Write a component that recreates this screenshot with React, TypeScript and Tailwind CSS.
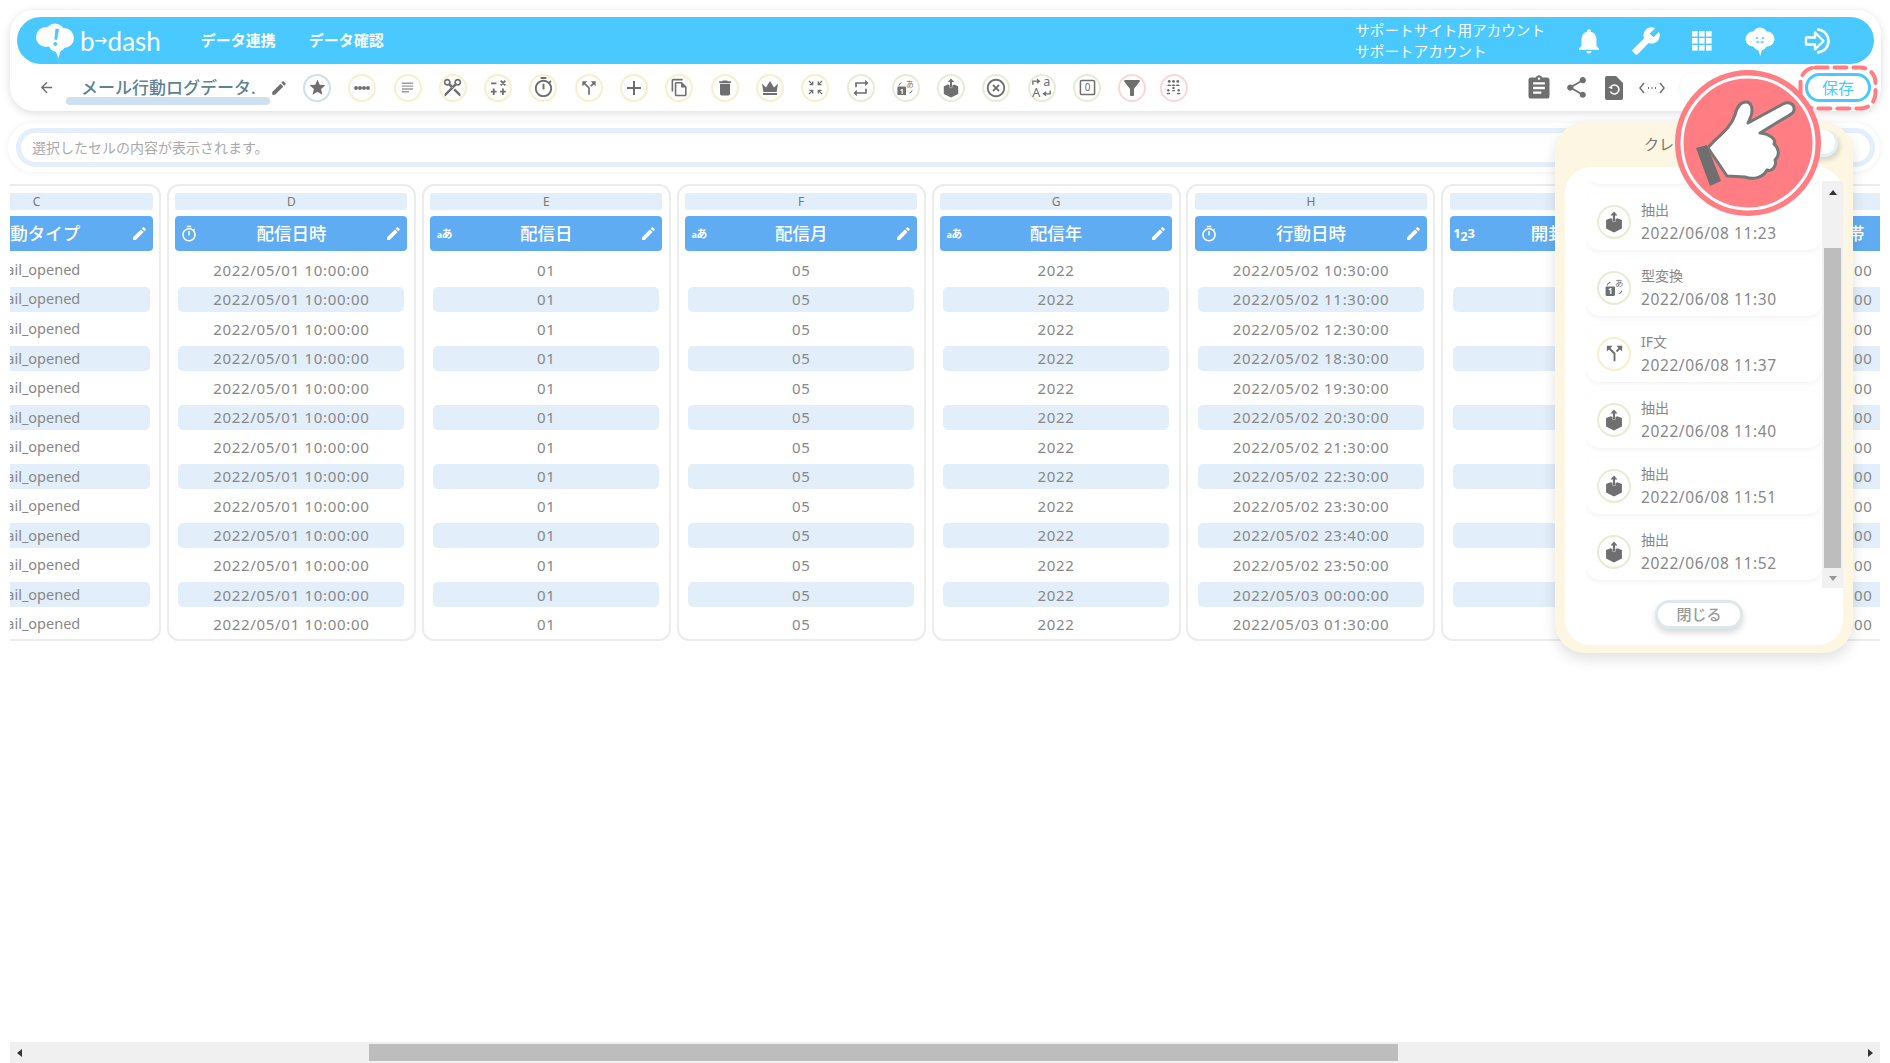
import type { ReactNode } from "react";
import {
  MdAdd,
  MdArrowBack,
  MdAssignment,
  MdBuild,
  MdCallSplit,
  MdDelete,
  MdEdit,
  MdFilterAlt,
  MdHighlightOff,
  MdNotifications,
  MdOutlineFileCopy,
  MdOutlineTimer,
  MdRepeat,
  MdShare,
  MdStar,
  MdSubject,
  MdContentCut,
} from "react-icons/md";

const font = "font-['Noto_Sans','Noto_Sans_CJK_JP',sans-serif]";

function Dots() {
  return (
    <svg viewBox="0 0 18 18" className="h-[18px] w-[18px]" fill="#6f6f6f">
      <rect x="2" y="8.6" width="14" height="0.8" />
      <circle cx="3" cy="9" r="1.9" />
      <circle cx="7" cy="9" r="1.9" />
      <circle cx="11" cy="9" r="1.9" />
      <circle cx="15" cy="9" r="1.9" />
    </svg>
  );
}

function Calc() {
  return (
    <svg viewBox="0 0 18 18" className="h-[19px] w-[19px]" stroke="#6f6f6f" strokeWidth="1.7" fill="none">
      <path d="M2 5h5M11 2.5l4.5 4.5M15.5 2.5L11 7M4.5 10v6M1.8 13h5.4M13.2 10v6M10.5 13h5.4" />
    </svg>
  );
}

function Crown() {
  return (
    <svg viewBox="0 0 20 18" className="h-[18px] w-[20px]" fill="#6f6f6f">
      <path d="M2 4.5l4 4L10 2l4 6.5 4-4-1.4 8.5H3.4z" />
      <rect x="3" y="14" width="14" height="2" />
    </svg>
  );
}

function Compress() {
  return (
    <svg viewBox="0 0 18 18" className="h-[17px] w-[17px]" fill="none" stroke="#6f6f6f" strokeWidth="1.4">
      <path d="M2 2l4 4M6 2.6V6H2.6M16 2l-4 4M12 2.6V6h3.4M2 16l4-4M6 15.4V12H2.6M16 16l-4-4M12 15.4V12h3.4" />
    </svg>
  );
}

function TypeChange({ size = 19 }: { size?: number }) {
  return (
    <svg viewBox="0 0 20 20" width={size} height={size} fill="none">
      <path d="M3 8a4 4 0 0 1 3-3M17 13a4 4 0 0 1-3 3" stroke="#6f6f6f" strokeWidth="1" />
      <rect x="1.5" y="9" width="9" height="9" rx="1" fill="#6f6f6f" />
      <text x="6" y="16.4" textAnchor="middle" fontSize="7.5" fontWeight="700" fill="#fff" fontFamily="Noto Sans">1</text>
      <text x="14.5" y="9" textAnchor="middle" fontSize="8" fill="#6f6f6f" fontFamily="Noto Sans CJK JP">あ</text>
    </svg>
  );
}

function BoxUp({ size = 20 }: { size?: number }) {
  return (
    <svg viewBox="0 0 20 20" width={size} height={size} fill="#6f6f6f">
      <path d="M2.8 8.2L7 6.6 10 8l3-1.4 4.2 1.6v7.8L10 19.6l-7.2-3.6z" />
      <path d="M10 .4l3.2 3.6H11v5.6H9V4H6.8z" stroke="#fff" strokeWidth="0.7" paintOrder="stroke" />
    </svg>
  );
}

function Translate() {
  return (
    <svg viewBox="0 0 20 20" className="h-[23px] w-[23px]" fill="none">
      <text x="5.5" y="18.5" textAnchor="middle" fontSize="11" fill="#6f6f6f" fontFamily="Noto Sans">A</text>
      <text x="14.5" y="9" textAnchor="middle" fontSize="11" fill="#6f6f6f" fontFamily="Noto Sans">a</text>
      <path d="M2.5 7.5V4.5h5M6 2.8l2.2 1.7L6 6.2M17.5 12.5v3h-5M14 13.8l-2.2 1.7 2.2 1.7" stroke="#6f6f6f" strokeWidth="1.2" />
    </svg>
  );
}

function ZeroBox() {
  return (
    <svg viewBox="0 0 18 18" className="h-[17px] w-[17px]" fill="none">
      <rect x="1.5" y="1.5" width="15" height="15" rx="1.5" stroke="#6f6f6f" strokeWidth="1.6" />
      <text x="9" y="13.2" textAnchor="middle" fontSize="10.5" fill="#6f6f6f" fontFamily="Noto Sans">0</text>
    </svg>
  );
}

function People() {
  return (
    <svg viewBox="0 0 20 20" className="h-[19px] w-[19px]" fill="#6f6f6f">
      <circle cx="5.5" cy="3.6" r="1.5" />
      <circle cx="10" cy="3.6" r="1.5" />
      <circle cx="14.5" cy="3.6" r="1.5" />
      <path d="M3.5 8.4c0-2 4-2 4 0zM8 8.4c0-2 4-2 4 0zM12.5 8.4c0-2 4-2 4 0z" />
      <circle cx="10" cy="10.6" r="1.3" />
      <path d="M8.2 14c0-1.8 3.6-1.8 3.6 0z" />
      <circle cx="4.6" cy="13" r="1.3" />
      <circle cx="15.4" cy="13" r="1.3" />
      <path d="M2.6 17c0-2 4-2 4 0zM13.4 17c0-2 4-2 4 0z" />
    </svg>
  );
}

function ToolCircle({ tone, children }: { tone: string; children: ReactNode }) {
  return (
    <div className={`flex h-7 w-7 shrink-0 items-center justify-center rounded-full border-2 bg-white text-[#6f6f6f] ${tone}`}>
      {children}
    </div>
  );
}

const blue = "border-[#cfe0f0]";
const yellow = "border-[#fbeecb]";
const green = "border-[#e8ecd5]";
const red = "border-[#fbd8d8]";

const tools: { tone: string; icon: ReactNode }[] = [
  { tone: blue, icon: <MdStar size={19} /> },
  { tone: yellow, icon: <Dots /> },
  { tone: yellow, icon: <MdSubject size={17} className="text-[#9a9a9a]" /> },
  { tone: yellow, icon: <MdContentCut size={21} className="rotate-90" /> },
  { tone: yellow, icon: <Calc /> },
  { tone: yellow, icon: <MdOutlineTimer size={23} /> },
  { tone: yellow, icon: <MdCallSplit size={20} /> },
  { tone: yellow, icon: <MdAdd size={24} /> },
  { tone: yellow, icon: <MdOutlineFileCopy size={19} /> },
  { tone: yellow, icon: <MdDelete size={20} /> },
  { tone: yellow, icon: <Crown /> },
  { tone: yellow, icon: <Compress /> },
  { tone: green, icon: <MdRepeat size={20} /> },
  { tone: green, icon: <TypeChange /> },
  { tone: green, icon: <BoxUp /> },
  { tone: green, icon: <MdHighlightOff size={22} /> },
  { tone: green, icon: <Translate /> },
  { tone: green, icon: <ZeroBox /> },
  { tone: red, icon: <MdFilterAlt size={24} /> },
];

function Logo() {
  return (
    <svg viewBox="0 0 40 36" className="h-[36px] w-[40px]" fill="#fff">
      <circle cx="11" cy="14" r="10" />
      <circle cx="20" cy="10" r="9.5" />
      <circle cx="29" cy="15" r="10" />
      <circle cx="22" cy="20" r="9" />
      <path d="M20 26l6 0-2.6 9.6z" />
      <path d="M20.5 5.5l3.5.4-2 11-2.6-.3z" fill="#49c9ff" />
      <circle cx="20.3" cy="21" r="1.9" fill="#49c9ff" />
    </svg>
  );
}

function BrainFace() {
  return (
    <svg viewBox="0 0 32 32" className="h-[32px] w-[32px]" fill="#fff">
      <circle cx="9" cy="14" r="7.5" />
      <circle cx="16" cy="10" r="7.5" />
      <circle cx="23" cy="14" r="7.5" />
      <circle cx="16" cy="18" r="7.5" />
      <path d="M13.5 23h5l-2.2 8z" />
      <path d="M18 3c4-3 8 0 8 3" stroke="#49c9ff" strokeWidth="1.2" fill="none" />
      <circle cx="13" cy="13" r="1.1" fill="#49c9ff" />
      <circle cx="19" cy="13" r="1.1" fill="#49c9ff" />
      <path d="M11.5 17.5c2-2 3.5-1.5 4.5-.3 1-1.2 2.5-1.7 4.5.3-2 .3-3.5.3-4.5-.2-1 .5-2.5.5-4.5.2z" fill="#49c9ff" />
    </svg>
  );
}

function Apps() {
  return (
    <svg viewBox="0 0 20 20" className="h-[20px] w-[20px]" fill="#fff">
      {[0, 7, 14].map((y) =>
        [0, 7, 14].map((x) => <rect key={`${x}-${y}`} x={x} y={y} width="5.6" height="5.6" />),
      )}
    </svg>
  );
}

function LoginIcon() {
  return (
    <svg viewBox="0 0 32 30" className="h-[30px] w-[32px]" fill="none" stroke="#fff">
      <path d="M13 3.5a11.5 11.5 0 1 1 0 23" strokeWidth="2.6" />
      <path d="M2 11.5h9V6.5l8.5 8.5-8.5 8.5v-5H2z" strokeWidth="2.4" strokeLinejoin="round" />
    </svg>
  );
}

function FileReset() {
  return (
    <svg viewBox="0 0 18 24" className="h-[24px] w-[18px]">
      <path d="M2 0h9l7 7v15a2 2 0 0 1-2 2H2a2 2 0 0 1-2-2V2a2 2 0 0 1 2-2z" fill="#6f6f6f" />
      <path d="M6 10.5a4.5 4.5 0 1 1-.6 5" fill="none" stroke="#fff" strokeWidth="1.6" />
      <path d="M3.4 11.6l3.8-2.2.2 3.8z" fill="#fff" />
    </svg>
  );
}

function CodeDots() {
  return (
    <svg viewBox="0 0 26 14" className="h-[14px] w-[26px]" fill="none" stroke="#6f6f6f" strokeWidth="1.5">
      <path d="M5 2L1 7l4 5M21 2l4 5-4 5" />
      <path d="M9 7h1M12.5 7h1M16 7h1" strokeWidth="1.8" />
    </svg>
  );
}

function TextTypeIcon() {
  return (
    <span className="text-[11px] leading-none font-bold tracking-tighter text-white">
      <span className="text-[9px]">a</span>あ
    </span>
  );
}

function NumberTypeIcon() {
  return <span className="text-[13px] leading-none font-bold tracking-tight text-white">1<sub className="text-[13px]">2</sub>3</span>;
}

type Column = {
  letter: string;
  title: string;
  icon: "text" | "time" | "number";
  rows: string[];
  numeric?: boolean;
};

const same = (v: string) => Array.from({ length: 13 }, () => v);

const columns: Column[] = [
  { letter: "C", title: "行動タイプ", icon: "text", rows: same("mail_opened") },
  { letter: "D", title: "配信日時", icon: "time", rows: same("2022/05/01 10:00:00"), numeric: true },
  { letter: "E", title: "配信日", icon: "text", rows: same("01"), numeric: true },
  { letter: "F", title: "配信月", icon: "text", rows: same("05"), numeric: true },
  { letter: "G", title: "配信年", icon: "text", rows: same("2022"), numeric: true },
  {
    letter: "H",
    title: "行動日時",
    icon: "time",
    numeric: true,
    rows: [
      "2022/05/02 10:30:00",
      "2022/05/02 11:30:00",
      "2022/05/02 12:30:00",
      "2022/05/02 18:30:00",
      "2022/05/02 19:30:00",
      "2022/05/02 20:30:00",
      "2022/05/02 21:30:00",
      "2022/05/02 22:30:00",
      "2022/05/02 23:30:00",
      "2022/05/02 23:40:00",
      "2022/05/02 23:50:00",
      "2022/05/03 00:00:00",
      "2022/05/03 01:30:00",
    ],
  },
  { letter: "I", title: "開封回数", icon: "number", rows: same("1"), numeric: true },
  { letter: "J", title: "行動時間帯", icon: "text", rows: same("5/02 10:00:00"), numeric: true },
];

function DataColumn({ col }: { col: Column }) {
  return (
    <div className="h-[457px] w-[249px] shrink-0 rounded-[12px] border-2 border-[#ececec] bg-white px-[6.5px] pt-[7px]">
      <div className="flex h-[17px] items-center justify-center rounded-[3px] bg-[#e2eef9] text-[12px] text-[#777]">
        {col.letter}
      </div>
      <div className="relative mt-[6px] flex h-[35px] items-center justify-center rounded-[4px] bg-[#60acf2] text-[17.5px] font-medium text-white">
        <span className="absolute left-[5px] flex w-[18px] justify-center">
          {col.icon === "time" && <MdOutlineTimer size={22} />}
          {col.icon === "text" && <TextTypeIcon />}
          {col.icon === "number" && <NumberTypeIcon />}
        </span>
        {col.title}
        <MdEdit size={17} className="absolute right-[5px]" />
      </div>
      <div className="mt-[4px]">
        {col.rows.map((v, i) => (
          <div key={i} className="flex h-[29.55px] items-center">
            <div
              className={`mx-[3px] flex h-[25px] flex-1 items-center justify-center rounded-[5px] text-[#888] ${
                col.numeric ? "text-[15px] tracking-[0.7px]" : "text-[14.5px]"
              } ${i % 2 === 1 ? "bg-[#e2eef9]" : ""}`}
            >
              {v}
            </div>
          </div>
        ))}
      </div>
    </div>
  );
}

const history: { label: string; time: string; tone: string; icon: ReactNode }[] = [
  { label: "抽出", time: "2022/06/08 11:20", tone: green, icon: <BoxUp /> },
  { label: "抽出", time: "2022/06/08 11:23", tone: green, icon: <BoxUp size={22} /> },
  { label: "型変換", time: "2022/06/08 11:30", tone: green, icon: <TypeChange size={21} /> },
  { label: "IF文", time: "2022/06/08 11:37", tone: yellow, icon: <MdCallSplit size={23} /> },
  { label: "抽出", time: "2022/06/08 11:40", tone: green, icon: <BoxUp size={22} /> },
  { label: "抽出", time: "2022/06/08 11:51", tone: green, icon: <BoxUp size={22} /> },
  { label: "抽出", time: "2022/06/08 11:52", tone: green, icon: <BoxUp size={22} /> },
];

function HistoryPanel() {
  return (
    <div className="absolute top-[122px] left-[1555px] h-[531px] w-[298px] rounded-[30px] bg-[#fdf6e3] shadow-[0_6px_14px_rgba(0,0,0,0.12)]">
      <div className="flex h-[45px] items-center justify-center text-[15px] text-[#777]">クレンジング履歴</div>
      <div className="absolute top-[8px] left-[215px] h-[27px] w-[68px] rounded-full border-r-[3px] border-b-[3px] border-[#e3f0fb] bg-white shadow-[2px_3px_5px_rgba(0,0,0,0.15)]" />
      <div className="mx-[10px] flex h-[478px] flex-col rounded-[26px] bg-white pt-[14px]">
        <div className="flex h-[407px] pl-[21px]">
          <div className="w-[237px] overflow-hidden">
            <div className="-mt-[54px] flex flex-col gap-[9px] pb-[4px]">
              {history.map((h, i) => (
                <div key={i} className="flex h-[57px] shrink-0 items-center gap-[10px] rounded-[14px] bg-white pl-[11px] shadow-[0_2px_5px_rgba(0,0,0,0.05)]">
                  <div className={`flex h-[34px] w-[34px] items-center justify-center rounded-full border-[2.5px] text-[#6f6f6f] ${h.tone}`}>
                    {h.icon}
                  </div>
                  <div className="flex flex-col text-[#888]">
                    <span className="text-[14px] leading-[22px]">{h.label}</span>
                    <span className="text-[15.5px] leading-[24px] tracking-[0.6px]">{h.time}</span>
                  </div>
                </div>
              ))}
            </div>
          </div>
          <div className="flex h-full w-[21px] shrink-0 flex-col items-center bg-[#f1f1f1] px-[2px]">
            <div className="flex h-[22px] shrink-0 items-center justify-center">
              <div className="h-0 w-0 border-x-[4.5px] border-b-[5px] border-x-transparent border-b-[#333]" />
            </div>
            <div className="mt-[45px] h-[320px] w-full bg-[#bdbdbd]" />
            <div className="flex h-[20px] shrink-0 items-center justify-center">
              <div className="h-0 w-0 border-x-[4.5px] border-t-[5px] border-x-transparent border-t-[#999]" />
            </div>
          </div>
        </div>
        <button className="mt-[12px] ml-[90px] h-[29px] w-[88px] rounded-full border-[3px] border-[#dde8ec] bg-white text-[15px] leading-none font-medium text-[#999] shadow-[0_4px_6px_rgba(0,0,0,0.15)]">
          閉じる
        </button>
      </div>
    </div>
  );
}

function PointerBadge() {
  return (
    <svg viewBox="0 0 146 146" className="absolute top-[70px] left-[1675px] h-[146px] w-[146px]">
      <circle cx="73" cy="73" r="73" fill="#ff7d83" />
      <circle cx="73" cy="73" r="66" fill="none" stroke="#fff" strokeWidth="3" />
      <path
        d="M33 78C40 68 55 60 60 45C62 36 66 32 71 32C77 32 78 40 76 46L73 53L108 34C114 31 120 34 119 40C119 43 116 44 113 46L85 63C95 64 102 70 99 74C104 78 105 86 100 90C102 96 97 102 92 100C88 108 78 110 70 107L52 106Z"
        fill="#fff"
        stroke="#777"
        strokeWidth="3"
        strokeLinejoin="round"
      />
      <path d="M21 78L32 75L46 111L35 116Z" fill="#6f6f6f" />
    </svg>
  );
}

function SaveMarker() {
  return (
    <svg viewBox="0 0 80 46" className="absolute top-[65px] left-[1798px] h-[46px] w-[80px]" fill="none">
      <rect x="2.5" y="2.5" width="75" height="41" rx="15" stroke="#ff7d83" strokeWidth="4" strokeDasharray="12 7" strokeLinecap="round" />
    </svg>
  );
}

export default function App() {
  return (
    <div className={`relative flex h-[1063px] w-[1890px] flex-col overflow-hidden bg-white ${font}`}>
      <header className="mx-[10px] mt-[10px] h-[101px] w-[1871px] shrink-0 rounded-[24px] bg-white px-[7px] pt-[7px] shadow-[0_2px_8px_rgba(0,0,0,0.14)]">
        <div className="flex h-[47px] items-center rounded-full bg-[#49c9ff] pl-[18px] text-white">
          <Logo />
          <span className="ml-[5px] flex items-center font-['Lato',sans-serif] text-[26px] leading-none">
            b<span className="text-[13px] font-bold">→</span>dash
          </span>
          <span className="ml-[40px] text-[15px] font-bold">データ連携</span>
          <span className="ml-[33px] text-[15px] font-bold">データ確認</span>
          <div className="ml-auto flex flex-col text-[14.6px] leading-[21px]">
            <span>サポートサイト用アカウント</span>
            <span>サポートアカウント</span>
          </div>
          <MdNotifications size={30} className="ml-[29px]" />
          <MdBuild size={30} className="ml-[27px] -scale-x-100" />
          <div className="ml-[31px]"><Apps /></div>
          <div className="ml-[32px]"><BrainFace /></div>
          <div className="mr-[38px] ml-[28px]"><LoginIcon /></div>
        </div>
        <div className="flex h-[47px] items-center pr-[3px] pl-[21px]">
          <MdArrowBack size={17} className="text-[#6f6f6f]" />
          <div className="relative ml-[11px] w-[204px] pl-[15px] text-[17px] font-medium text-[#5f8291]">
            メール行動ログデータ.
            <div className="absolute top-[22px] left-0 h-[8px] w-full rounded-full bg-[#cfe0f0] -z-0" />
          </div>
          <MdEdit size={18} className="ml-0 text-[#6f6f6f]" />
          <div className="ml-[15px] flex gap-[17.3px]">
            {tools.map((t, i) => (
              <ToolCircle key={i} tone={t.tone}>{t.icon}</ToolCircle>
            ))}
            <div className="-ml-[4px]">
              <ToolCircle tone={red}><People /></ToolCircle>
            </div>
          </div>
          <div className="ml-auto flex items-center">
            <MdAssignment size={28} className="text-[#6f6f6f]" />
            <MdShare size={25} className="ml-[11px] text-[#6f6f6f]" />
            <div className="ml-[16px]"><FileReset /></div>
            <div className="ml-[16px]"><CodeDots /></div>
            <div className="ml-[15px] h-[29px] w-[110px] rounded-full bg-white shadow-[0_1px_4px_rgba(0,0,0,0.06)]" />
            <button className="ml-[15px] h-[29px] w-[66px] rounded-full border-[3px] border-[#49c9ff] bg-white text-[16px] leading-none text-[#49c9ff]">
              保存
            </button>
          </div>
        </div>
      </header>

      <div className="mx-[8px] mt-[12px] h-[49px] w-[1872px] shrink-0 rounded-full bg-white pt-[5px] pr-[5px] pl-[8px] shadow-[0_0_6px_rgba(0,0,0,0.07)]">
        <div className="flex h-[39px] items-center rounded-full border-[5px] border-[#e3f0fb] pl-[11px] text-[14px] text-[#aaa]">
          選択したセルの内容が表示されます。
        </div>
      </div>

      <div className="mx-[10px] mt-[12px] flex w-[1870px] shrink-0 overflow-hidden">
        <div className="-ml-[98px] flex gap-[5.9px]">
          {columns.map((c) => (
            <DataColumn key={c.letter} col={c} />
          ))}
        </div>
      </div>

      <div className="mx-[10px] mt-auto flex h-[21px] w-[1870px] shrink-0 items-center bg-[#f0f0f0]">
        <div className="ml-[7px] h-0 w-0 border-y-[4.5px] border-r-[5px] border-y-transparent border-r-[#333]" />
        <div className="ml-[347px] h-[17px] w-[1029px] bg-[#bdbdbd]" />
        <div className="ml-[470px] h-0 w-0 border-y-[4.5px] border-l-[5px] border-y-transparent border-l-[#333]" />
      </div>

      <HistoryPanel />
      <SaveMarker />
      <PointerBadge />
    </div>
  );
}
